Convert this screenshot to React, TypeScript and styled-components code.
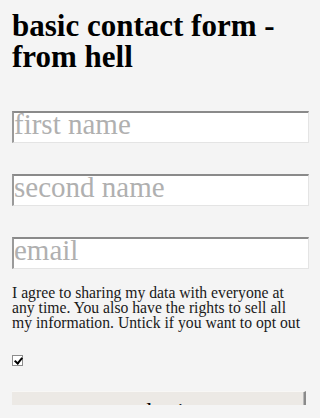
import React from 'react'
import styled, { createGlobalStyle } from 'styled-components'

const GlobalStyle = createGlobalStyle`
    html, body {
        margin: 0;
        padding: 0;
        background: #f4f4f4;
    }
`

const Frame = styled.div`
    height: 405px;
    overflow: hidden;
    background: #f4f4f4;
    font-family: "Liberation Serif", "Times New Roman", serif;
    color: #111;
`

const Form = styled.form`
    display: flex;
    flex-direction: column;
    padding: 10px 12px 0 12px;
`

const Title = styled.h1`
    margin: 0 0 39px 0;
    font-size: 31px;
    line-height: 31px;
    font-weight: bold;
    color: #000;
`

const Field = styled.input<{ $last?: boolean }>`
    box-sizing: border-box;
    width: 297px;
    height: 32px;
    margin: 0 0 ${(p) => (p.$last ? '16px' : '31px')} 0;
    padding: 0 0 6px 0;
    background: #fff;
    border: 1px solid #e4e4e4;
    border-top: 2px solid #8a8a8a;
    border-left: 2px solid #9a9a9a;
    border-radius: 0;
    font-family: "Liberation Serif", "Times New Roman", serif;
    font-size: 29px;
    color: #222;
    outline: none;

    &::placeholder {
        color: #b0b0b0;
    }
`

const Terms = styled.p`
    margin: 0 0 25px 0;
    width: 292px;
    font-size: 15.7px;
    line-height: 15px;
    color: #1a1a1a;
`

const Check = styled.input`
    appearance: none;
    box-sizing: border-box;
    width: 11px;
    height: 11px;
    margin: 0 0 25px 0;
    background: #fff;
    border: 1px solid #8c8c8c;
    position: relative;

    &:checked::after {
        content: "";
        position: absolute;
        left: 2.5px;
        top: 0px;
        width: 3px;
        height: 6px;
        border: solid #000;
        border-width: 0 2px 2px 0;
        transform: rotate(40deg);
    }
`

const Submit = styled.button`
    box-sizing: border-box;
    flex-shrink: 0;
    width: 294px;
    height: 44px;
    padding: 6px 0 0 0;
    background: #ece9e5;
    border: none;
    border-top: 1px solid #f8f7f5;
    border-right: 2px solid #8a8a8a;
    box-shadow: inset -1px 0 0 #b8b8b8;
    font-family: "Liberation Serif", "Times New Roman", serif;
    font-size: 24px;
    line-height: normal;
    color: #000;
    align-self: flex-start;
    display: flex;
    justify-content: center;
    align-items: flex-start;
`

function App() {
    return (
        <Frame>
            <GlobalStyle />
            <Form onSubmit={(e) => e.preventDefault()}>
                <Title>basic contact form - from hell</Title>
                <Field type="text" placeholder="first name" />
                <Field type="text" placeholder="second name" />
                <Field type="email" placeholder="email" $last />
                <Terms>
                    I agree to sharing my data with everyone at any time. You also have the rights to sell all my information. Untick if you want to opt out
                </Terms>
                <Check type="checkbox" defaultChecked />
                <Submit type="submit">submit</Submit>
            </Form>
        </Frame>
    )
}

export default App
